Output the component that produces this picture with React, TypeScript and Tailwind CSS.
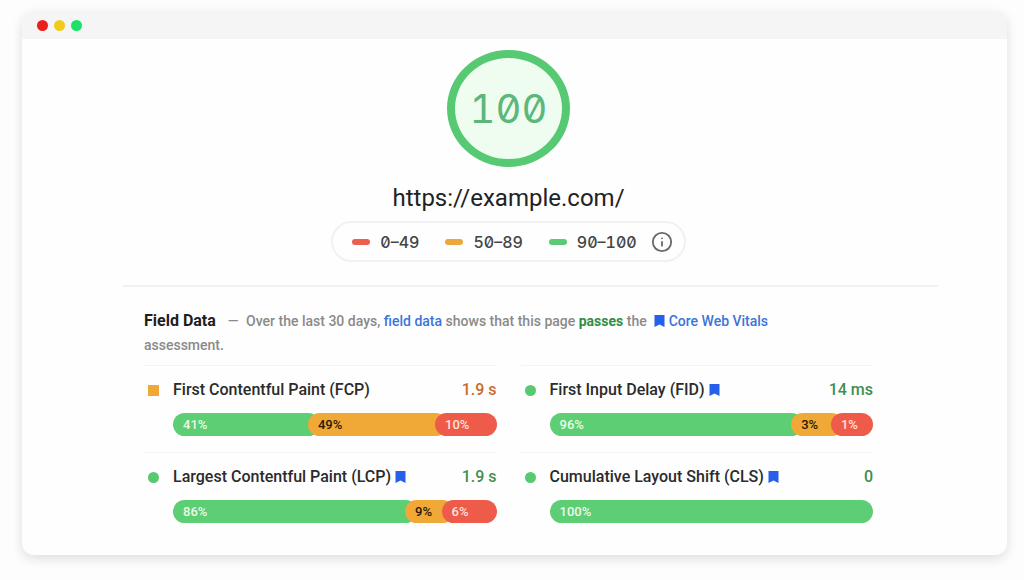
import { Info } from 'lucide-react'

type Rating = 'good' | 'average' | 'poor'

interface Segment {
  rating: Rating
  label: string
  width?: number
}

interface Metric {
  name: string
  value: string
  rating: Rating
  vital: boolean
  segments: Segment[]
}

// The first segment of a bar has no width, it takes what the others leave
const metrics: Metric[] = [
  {
    name: 'First Contentful Paint (FCP)', value: '1.9 s', rating: 'average', vital: false,
    segments: [
      { rating: 'good', label: '41%' },
      { rating: 'average', label: '49%', width: 43 },
      { rating: 'poor', label: '10%', width: 19 },
    ],
  },
  {
    name: 'First Input Delay (FID)', value: '14 ms', rating: 'good', vital: true,
    segments: [
      { rating: 'good', label: '96%' },
      { rating: 'average', label: '3%', width: 16 },
      { rating: 'poor', label: '1%', width: 13 },
    ],
  },
  {
    name: 'Largest Contentful Paint (LCP)', value: '1.9 s', rating: 'good', vital: true,
    segments: [
      { rating: 'good', label: '86%' },
      { rating: 'average', label: '9%', width: 15 },
      { rating: 'poor', label: '6%', width: 17 },
    ],
  },
  {
    name: 'Cumulative Layout Shift (CLS)', value: '0', rating: 'good', vital: true,
    segments: [{ rating: 'good', label: '100%' }],
  },
]

const legend = [
  { range: '0–49', color: 'bg-[#ec5f4e]' },
  { range: '50–89', color: 'bg-[#eaa93a]' },
  { range: '90–100', color: 'bg-[#5acb74]' },
]

const segmentColors: Record<Rating, string> = {
  good: 'bg-[#5dce74] text-[#e9fbe9]',
  average: 'bg-[#f0a837] text-[#2a1a04]',
  poor: 'bg-[#ee5b4a] text-[#ffe1db]',
}

const markers: Record<Rating, string> = {
  good: 'rounded-full bg-[#57c96f]',
  average: 'bg-[#f0a837]',
  poor: 'bg-[#ee5b4a]',
}

const valueColors: Record<Rating, string> = {
  good: 'text-[#3f8f52]',
  average: 'text-[#cb6a2a]',
  poor: 'text-[#c7352b]',
}

function Bookmark() {
  return (
    <svg viewBox="0 0 11 12" className="inline-block align-[-1px] w-[11px] h-3 shrink-0" fill="#2660ea" aria-hidden="true">
      <path d="M0.5 0H10.5V12L5.5 9.6L0.5 12Z" />
    </svg>
  )
}

function MetricCard({ metric }: { metric: Metric }) {
  return (
    <div className="border-t border-[#f4f4f4] pt-3 h-[87px]">
      <div className="flex items-center h-6">
        <span className={`w-[11px] h-[11px] ml-1 mr-[14px] shrink-0 ${markers[metric.rating]}`} />
        <h3 className="flex items-center gap-1 text-base font-medium text-[#2b2b2b] whitespace-nowrap">
          {metric.name}
          {metric.vital && <Bookmark />}
        </h3>
        <span className={`ml-auto text-base font-medium whitespace-nowrap ${valueColors[metric.rating]}`}>
          {metric.value}
        </span>
      </div>
      <div className="flex mt-[11px] ml-[29px] h-[23px]">
        {metric.segments.map((segment, idx) => (
          <div
            key={segment.rating}
            className={`flex items-center pl-[10px] rounded-full text-[13px] font-medium ${
              idx === 0 ? 'flex-1' : '-ml-3 shrink-0'
            } ${segmentColors[segment.rating]}`}
            style={segment.width ? { width: `${segment.width}%` } : undefined}
          >
            {segment.label}
          </div>
        ))}
      </div>
    </div>
  )
}

export default function App() {
  return (
    <div className="min-h-screen bg-[#fdfdfd] pt-[11px] pb-6 pl-[22px] pr-[17px] font-['Roboto','Liberation_Sans',sans-serif]">
      <div className="rounded-xl bg-[#fefefe] overflow-hidden shadow-[0_4px_12px_rgba(0,0,0,0.12)]">
        {/* Window bar */}
        <div className="flex items-center gap-[6px] h-7 pl-[15px] bg-[#f5f5f5]">
          <span className="w-[11px] h-[11px] rounded-full bg-[#e9201c]" />
          <span className="w-[11px] h-[11px] rounded-full bg-[#f2cb17]" />
          <span className="w-[11px] h-[11px] rounded-full bg-[#1ee068]" />
        </div>

        <main className="pl-[101px] pr-[69px] pt-[11px] pb-4">
          {/* Score */}
          <header className="flex flex-col items-center pl-[21px] pr-[65px] pb-[23px] border-b-2 border-[#f1f1f1]">
            <div className="flex items-center justify-center w-[123px] h-[117px] rounded-[50%] border-8 border-[#57c972] bg-[#effdf1] font-['Inter',sans-serif] text-[40px] font-normal text-[#5bb87a] slashed-zero tabular-nums">
              100
            </div>
            <h1 className="mt-[15px] text-2xl leading-8 text-[#222222]">https://example.com/</h1>
            <div className="flex items-center gap-[26px] mt-[7px] h-[41px] px-[19px] rounded-full border-2 border-[#f1f1f1]">
              {legend.map((item) => (
                <span
                  key={item.range}
                  className="flex items-center gap-[10px] font-['Inter',sans-serif] text-base font-medium text-[#454545] slashed-zero tabular-nums"
                >
                  <span className={`w-[18px] h-[6px] rounded-sm ${item.color}`} />
                  {item.range}
                </span>
              ))}
              <button type="button" aria-label="About the score" className="-ml-3 -mr-2">
                <Info className="w-[22px] h-[22px] text-[#6a6a6a]" strokeWidth={2} />
              </button>
            </div>
          </header>

          {/* Field data */}
          <section className="pl-[21px] pr-[65px] pt-[22px]">
            <p className="max-w-[680px] text-sm leading-6 font-medium text-[#8a8a8a]">
              <strong className="mr-3 text-base leading-6 font-bold text-[#1d1d1d]">Field Data</strong>
              <span className="mr-1">—</span> Over the last 30 days,{' '}
              <a href="#field-data" className="text-[#3b74dc]">field data</a> shows that this page{' '}
              <b className="font-bold text-[#2f8f43]">passes</b> the{' '}
              <a href="#core-web-vitals" className="ml-1 text-[#3b74dc]">
                <Bookmark /> Core Web Vitals
              </a>{' '}
              assessment.
            </p>
            <div id="field-data" className="grid grid-cols-2 gap-x-6 mt-2">
              {metrics.map((metric) => (
                <MetricCard key={metric.name} metric={metric} />
              ))}
            </div>
          </section>
        </main>
      </div>
    </div>
  )
}
